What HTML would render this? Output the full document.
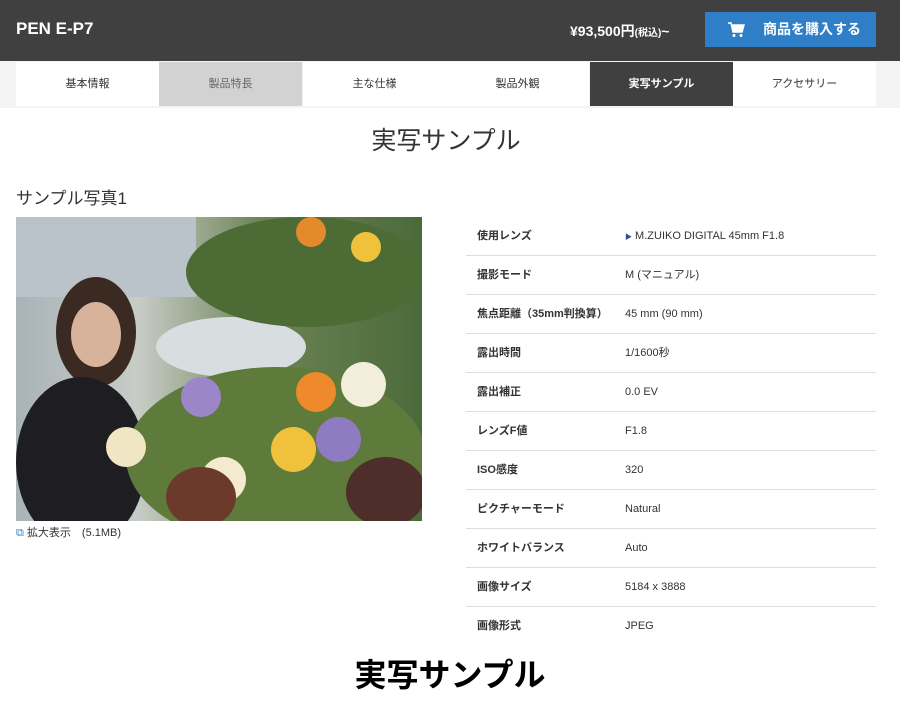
<!DOCTYPE html>
<html><head><meta charset="utf-8"><style>
body{margin:0;width:900px;height:710px;background:#fff;font-family:"Liberation Sans","Noto Sans CJK JP",sans-serif;color:#333;overflow:hidden;position:relative}
.hd{position:absolute;left:0;top:0;width:900px;height:61px;background:#404040;color:#fff}
.hd .t{position:absolute;left:16px;top:19px;font-size:17px;font-weight:bold}
.hd .p{position:absolute;left:570px;top:21px;font-size:14px;font-weight:bold}
.hd .p small{font-size:10px}
.btn{position:absolute;left:705px;top:12px;width:171px;height:35px;background:#2f7fc8;font-size:14px;line-height:35px;font-weight:bold}
.btn span{position:absolute;left:58px}
.nav{position:absolute;left:0;top:61px;width:900px;height:47px;background:#f3f3f3}
.nav div{position:absolute;top:1px;width:143px;height:44px;line-height:44px;text-align:center;font-size:11px;background:#fff;color:#333}
h1{position:absolute;left:0;top:121px;width:892px;margin:0;text-align:center;font-weight:normal;font-size:25px;color:#333}
h2{position:absolute;left:16px;top:184px;margin:0;font-weight:normal;font-size:17px}
.img{position:absolute;left:16px;top:217px;width:406px;height:304px;overflow:hidden;background:linear-gradient(90deg,#a9b3b8 0,#c8ccc7 30%,#6e8457 60%,#4b6a3a 100%)}
.img i{position:absolute;border-radius:50%}
.cap{position:absolute;left:16px;top:524px;font-size:11px}
.tb{position:absolute;left:466px;top:217px;width:410px}
.r{height:38px;border-bottom:1px solid #ddd;font-size:11px;line-height:38px;position:relative}
.r b{position:absolute;left:11px}
.r span{position:absolute;left:159px}
.big{position:absolute;left:0;top:650px;width:900px;text-align:center;font-size:32px;font-weight:bold;color:#000}
</style></head><body>
<div class="hd"><div class="t">PEN E-P7</div><div class="p">¥93,500円<small>(税込)</small>~</div>
<div class="btn"><svg style="position:absolute;left:22px;top:9px" width="18" height="17" viewBox="0 0 18 17"><path d="M1 2h3l2 9h9l2-7H5" fill="#fff" stroke="#fff" stroke-width="1.5"/><circle cx="7" cy="14.5" r="1.5" fill="#fff"/><circle cx="14" cy="14.5" r="1.5" fill="#fff"/></svg><span>商品を購入する</span></div></div>
<div class="nav">
<div style="left:16px">基本情報</div>
<div style="left:159px;background:#d2d2d2;color:#666">製品特長</div>
<div style="left:303px">主な仕様</div>
<div style="left:446px">製品外観</div>
<div style="left:590px;background:#404040;color:#fff;font-weight:bold">実写サンプル</div>
<div style="left:733px">アクセサリー</div>
</div>
<h1>実写サンプル</h1>
<h2>サンプル写真1</h2>
<div class="img">
<i style="left:-20px;top:-40px;width:200px;height:120px;background:#b9c3c9;border-radius:0"></i>
<i style="left:40px;top:60px;width:80px;height:110px;background:#3a2a22"></i>
<i style="left:55px;top:85px;width:50px;height:65px;background:#d7b39b"></i>
<i style="left:0;top:160px;width:130px;height:170px;background:#1e1e22"></i>
<i style="left:140px;top:100px;width:150px;height:60px;background:#d8dde0"></i>
<i style="left:170px;top:0;width:240px;height:110px;background:#4d6b35"></i>
<i style="left:280px;top:0;width:30px;height:30px;background:#e38a2a"></i>
<i style="left:335px;top:15px;width:30px;height:30px;background:#f0c23c"></i>
<i style="left:110px;top:150px;width:300px;height:180px;background:#5f7b3b"></i>
<i style="left:165px;top:160px;width:40px;height:40px;background:#9b86c9"></i>
<i style="left:280px;top:155px;width:40px;height:40px;background:#ee8a2c"></i>
<i style="left:325px;top:145px;width:45px;height:45px;background:#f3eedb"></i>
<i style="left:300px;top:200px;width:45px;height:45px;background:#8f7bc0"></i>
<i style="left:255px;top:210px;width:45px;height:45px;background:#f0c23c"></i>
<i style="left:90px;top:210px;width:40px;height:40px;background:#f0e6c4"></i>
<i style="left:185px;top:240px;width:45px;height:45px;background:#f3ead0"></i>
<i style="left:150px;top:250px;width:70px;height:60px;background:#6c3a2a"></i>
<i style="left:330px;top:240px;width:80px;height:70px;background:#4e2e2b"></i>
</div>
<div class="cap"><span style="color:#2f7fc8">⧉</span> 拡大表示　(5.1MB)</div>
<div class="tb">
<div class="r"><b>使用レンズ</b><span><small style="color:#2f4f8f;font-size:7px">▶</small> M.ZUIKO DIGITAL 45mm F1.8</span></div>
<div class="r"><b>撮影モード</b><span>M (マニュアル)</span></div>
<div class="r"><b>焦点距離（35mm判換算）</b><span>45 mm (90 mm)</span></div>
<div class="r"><b>露出時間</b><span>1/1600秒</span></div>
<div class="r"><b>露出補正</b><span>0.0 EV</span></div>
<div class="r"><b>レンズF値</b><span>F1.8</span></div>
<div class="r"><b>ISO感度</b><span>320</span></div>
<div class="r"><b>ピクチャーモード</b><span>Natural</span></div>
<div class="r"><b>ホワイトバランス</b><span>Auto</span></div>
<div class="r"><b>画像サイズ</b><span>5184 x 3888</span></div>
<div class="r" style="border:0"><b>画像形式</b><span>JPEG</span></div>
</div>
<div class="big">実写サンプル</div>
</body></html>
